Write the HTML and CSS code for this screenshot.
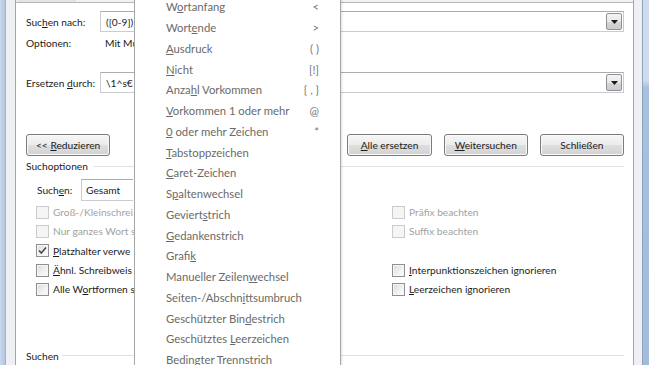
FILE: index.html
```html
<!DOCTYPE html>
<html lang="de">
<head>
<meta charset="utf-8">
<title>Suchen und Ersetzen</title>
<link rel="stylesheet" href="styles.css">
</head>
<body>
<div class="screen">
  <div class="frame-blue left"></div>
  <div class="frame-gray"></div>
  <div class="pane">
    <div class="tabstrip"><div class="tab"></div></div>
    <div class="content">
      <div class="row find">
        <span class="lbl">Suc<u>h</u>en nach:</span>
        <div class="combo"><span class="val">([0-9])</span><span class="drop"><svg width="7" height="4" viewBox="0 0 7 4"><polygon points="0,0 7,0 3.5,4" fill="#1a1a1a"/></svg></span></div>
      </div>
      <div class="row opts">
        <span class="lbl">Optionen:</span>
        <span class="optval">Mit Mu</span>
      </div>
      <div class="row repl">
        <span class="lbl">Ersetzen <u>d</u>urch:</span>
        <div class="combo"><span class="val">\1^s€</span><span class="drop"><svg width="7" height="4" viewBox="0 0 7 4"><polygon points="0,0 7,0 3.5,4" fill="#1a1a1a"/></svg></span></div>
      </div>
      <div class="buttons">
        <button class="btn">&lt;&lt; <u>R</u>eduzieren</button>
        <div class="spacer"></div>
        <button class="btn"><u>A</u>lle ersetzen</button>
        <button class="btn"><u>W</u>eitersuchen</button>
        <button class="btn">Schließen</button>
      </div>
      <div class="group"><span>Suchoptionen</span><span class="line"></span></div>
      <div class="row searchdir">
        <span class="lbl2">Such<u>e</u>n:</span>
        <div class="select"><span class="val">Gesamt</span></div>
      </div>
      <div class="checks">
        <div class="chk disabled"><span class="box"></span><span class="txt">Groß-/Kleinschrei</span></div>
        <div class="chk disabled"><span class="box"></span><span class="txt">Präfix beachten</span></div>
        <div class="chk disabled"><span class="box"></span><span class="txt">Nur ganzes Wort s</span></div>
        <div class="chk disabled"><span class="box"></span><span class="txt">Suffix beachten</span></div>
        <div class="chk"><span class="box"><svg width="11" height="11" viewBox="0 0 11 11"><polyline points="2,5.5 4.3,8 9,2.5" fill="none" stroke="#4b4b4b" stroke-width="1.6"/></svg></span><span class="txt"><u>P</u>latzhalter verwe</span></div>
        <div class="chk empty"></div>
        <div class="chk"><span class="box"></span><span class="txt"><u>Ä</u>hnl. Schreibweis</span></div>
        <div class="chk"><span class="box"></span><span class="txt"><u>I</u>nterpunktionszeichen ignorieren</span></div>
        <div class="chk"><span class="box"></span><span class="txt">Alle W<u>o</u>rtformen s</span></div>
        <div class="chk"><span class="box"></span><span class="txt"><u>L</u>eerzeichen ignorieren</span></div>
      </div>
      <div class="group bottom"><span>Suchen</span><span class="line"></span></div>
    </div>
  </div>
  <div class="frame-gray right"></div>
  <div class="frame-blue right"></div>
</div>

<div class="menu">
  <div class="item"><span>W<u>o</u>rtanfang</span><span class="key">&lt;</span></div>
  <div class="item"><span>Wort<u>e</u>nde</span><span class="key">&gt;</span></div>
  <div class="item"><span><u>A</u>usdruck</span><span class="key">( )</span></div>
  <div class="item"><span><u>N</u>icht</span><span class="key">[!]</span></div>
  <div class="item"><span>Anza<u>h</u>l Vorkommen</span><span class="key">{ , }</span></div>
  <div class="item"><span><u>V</u>orkommen 1 oder mehr</span><span class="key">@</span></div>
  <div class="item"><span><u>0</u> oder mehr Zeichen</span><span class="key">*</span></div>
  <div class="item"><span><u>T</u>abstoppzeichen</span></div>
  <div class="item"><span><u>C</u>aret-Zeichen</span></div>
  <div class="item"><span>S<u>p</u>altenwechsel</span></div>
  <div class="item"><span>Geviert<u>s</u>trich</span></div>
  <div class="item"><span><u>G</u>edankenstrich</span></div>
  <div class="item"><span>Grafi<u>k</u></span></div>
  <div class="item"><span>Manueller Zeilen<u>w</u>echsel</span></div>
  <div class="item"><span>Seiten-/Abschn<u>i</u>ttsumbruch</span></div>
  <div class="item"><span>Geschützter Bin<u>d</u>estrich</span></div>
  <div class="item"><span>Geschütztes <u>L</u>eerzeichen</span></div>
  <div class="item"><span>Bedingter T<u>r</u>ennstrich</span></div>
</div>
</body>
</html>
```

FILE: styles.css
```css
* { box-sizing: border-box; margin: 0; padding: 0; }
html, body { width: 649px; height: 365px; overflow: hidden; }
body {
  position: relative;
  font-family: Lato, "Open Sans", sans-serif;
  font-size: 10.2px;
  color: #1c1c1c;
  background: #f0f0f0;
}
u { text-decoration: underline; text-underline-offset: 1px; }

.screen { display: flex; height: 365px; }
.frame-blue { background: linear-gradient(90deg, #c8d8ec, #b2c7e1); }
.frame-blue.left { width: 6px; border-right: 1px solid #9fb3cc; }
.frame-blue.right { width: 7px; border-left: 1px solid #8ea2bb; background: linear-gradient(180deg, #cfdcec 0%, #cfdcec 22%, #a9c0dd 24%, #a3bcdc 100%); }
.frame-gray { width: 9px; background: #eef0f3; }
.frame-gray.right { width: 8px; }

.pane {
  width: 619px;
  display: flex;
  flex-direction: column;
  border-left: 1px solid #a4a8ad;
  border-right: 1px solid #a4a8ad;
  background: #fff;
}
.tabstrip { height: 2px; background: #f2f2f2; padding-left: 1px; }
.tab { width: 59px; height: 2px; background: #e4e4e4; }
.content {
  flex: 1;
  border-top: 1px solid #b4b7ba;
  padding: 0 9px 0 10px;
  display: flex;
  flex-direction: column;
}

.row { display: flex; align-items: center; }
.lbl { width: 74px; white-space: nowrap; }
.find { margin-top: 8px; }
.opts { margin-top: 4px; height: 14px; }
.optval { padding-left: 5px; white-space: nowrap; }
.repl { margin-top: 22px; }

.combo {
  flex: 1;
  height: 21px;
  display: flex;
  align-items: center;
  justify-content: space-between;
  border: 1px solid #c9ccd2;
  border-top-color: #a9acb2;
  padding: 0 1px 0 5px;
}
.val { white-space: nowrap; }
.drop {
  width: 16px;
  height: 17px;
  display: flex;
  align-items: center;
  justify-content: center;
  border: 1px solid #8f9295;
  border-radius: 2px;
  background: linear-gradient(#f4f4f4 0%, #e8e8e8 50%, #d6d6d6 51%, #cbcbcb 100%);
}

.buttons { display: flex; gap: 12px; margin-top: 41px; height: 22px; }
.spacer { width: 218px; }
.btn {
  width: 86px;
  height: 22px;
  font: inherit;
  color: #1c1c1c;
  border: 1px solid #7a7a7a;
  border-radius: 3px;
  background: linear-gradient(#f6f6f6 0%, #ececec 48%, #dedede 52%, #d3d3d3 100%);
  box-shadow: inset 0 0 0 1px #fafafa;
}

.group { display: flex; align-items: center; height: 18px; margin-top: 1px; gap: 6px; }
.group .line { flex: 1; height: 1px; background: #dde2e6; }
.group.bottom { margin-top: 48px; gap: 3px; }

.searchdir { margin-top: 4px; padding-left: 11px; }
.lbl2 { width: 44px; white-space: nowrap; }
.select {
  width: 52px;
  height: 22px;
  display: flex;
  align-items: center;
  padding-left: 4px;
  border: 1px solid #c9ccd2;
  border-top-color: #a9acb2;
  border-right: none;
}

.checks {
  margin-top: 1.5px;
  display: grid;
  grid-template-columns: 356px 1fr;
  grid-auto-rows: 19.3px;
  padding-left: 10px;
}
.chk { display: flex; align-items: center; white-space: nowrap; }
.txt { padding-left: 4px; }
.box {
  width: 13px;
  height: 13px;
  display: flex;
  align-items: center;
  justify-content: center;
  border: 1px solid #8f8f8f;
  background: linear-gradient(135deg, #dadada 0%, #f2f2f2 60%, #ffffff 100%);
  box-shadow: inset 0 0 0 1px #f6f6f6;
  flex: none;
}
.chk.disabled { color: #a2a2a2; }
.chk.disabled .box { border-color: #cbcbcb; background: #f5f5f5; box-shadow: none; }

.menu {
  position: absolute;
  left: 134px;
  top: -5px;
  width: 207px;
  height: 380px;
  padding-top: 0.6px;
  background: #fff;
  border: 1px solid #a7a7a7;
  box-shadow: 1px 1px 2px rgba(0,0,0,0.12);
  font-size: 11.3px;
  color: #6a6a6a;
}
.item {
  height: 20.75px;
  display: flex;
  align-items: center;
  justify-content: space-between;
  padding: 0 21px 0 31px;
  white-space: nowrap;
}
.key { color: #777; }
```
